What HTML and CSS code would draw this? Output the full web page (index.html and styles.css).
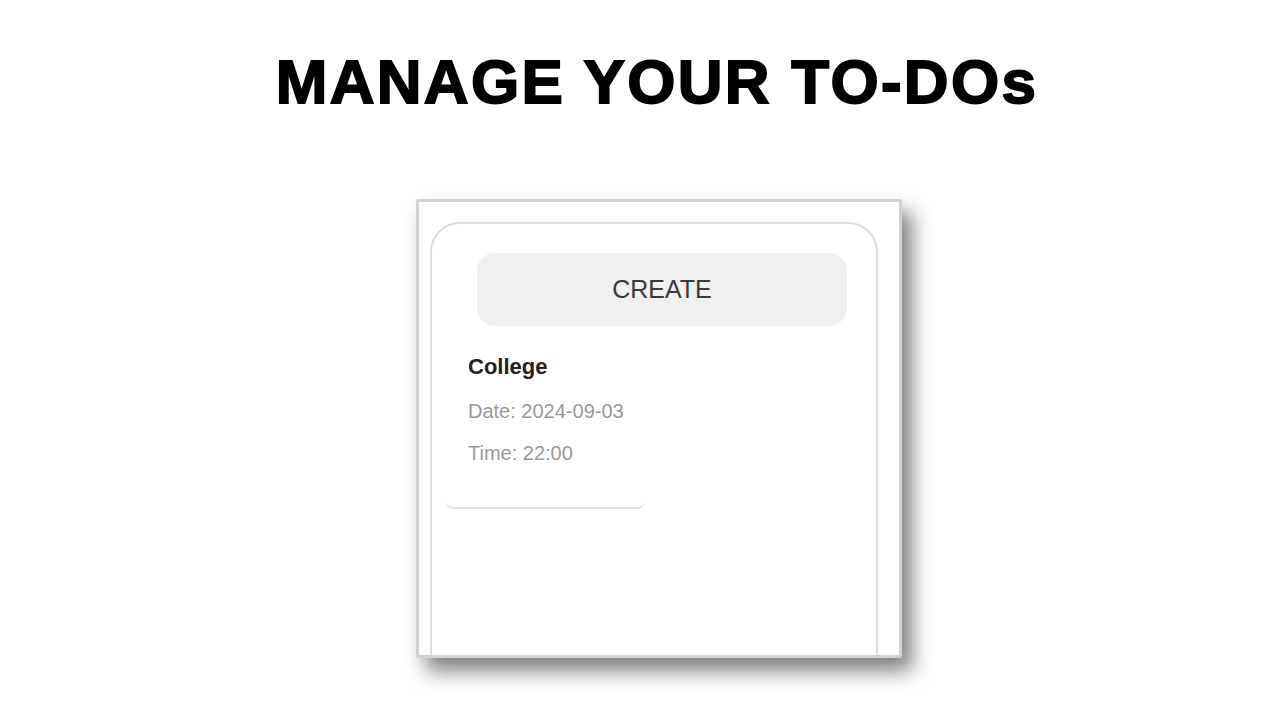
FILE: index.html
```html
<!DOCTYPE html>
<html>
<head>
<meta charset="utf-8">
<link rel="stylesheet" href="styles.css">
</head>
<body>
<div class="slide">
  <h1 class="title">MANAGE YOUR TO-DOs</h1>
  <div class="frame">
    <div class="panel">
      <div class="create">CREATE</div>
      <div class="card">
        <div class="card-title">College</div>
        <div class="card-meta">Date: 2024-09-03</div>
        <div class="card-meta">Time: 22:00</div>
      </div>
    </div>
  </div>
</div>
</body>
</html>
```
FILE: styles.css
```css
html, body {
  margin: 0;
  padding: 0;
  background: #ffffff;
}
.slide {
  width: 1280px;
  height: 720px;
  overflow: hidden;
  position: relative;
  font-family: "Liberation Sans", Arial, sans-serif;
}
.title {
  margin: 0;
  padding-top: 42px;
  height: 157px;
  box-sizing: border-box;
  text-align: center;
  font-family: "Liberation Sans", Arial, sans-serif;
  font-weight: bold;
  font-size: 62px;
  line-height: 80px;
  letter-spacing: 2.3px;
  color: #000;
  -webkit-text-stroke: 1.8px #000;
  padding-left: 34px;
}
.frame {
  margin-top: 42px;
  margin-left: 416px;
  width: 486px;
  height: 459px;
  box-sizing: border-box;
  border: 3px solid #d2d2d2;
  border-radius: 2px;
  background: #fff;
  box-shadow: 10px 13px 20px rgba(0, 0, 0, 0.5);
  overflow: hidden;
  padding-top: 20px;
  padding-left: 11px;
}
.panel {
  width: 448px;
  height: 520px;
  box-sizing: border-box;
  border: 2px solid #dcdcdc;
  border-radius: 30px;
  padding-top: 29px;
}
.create {
  margin-left: 45px;
  width: 370px;
  height: 73px;
  background: #f0f0f0;
  border-radius: 18px;
  display: flex;
  align-items: center;
  justify-content: center;
  font-size: 25px;
  color: #3a3a3a;
}
.card {
  margin-left: 13px;
  margin-top: 14px;
  width: 200px;
  box-sizing: border-box;
  padding: 13px 0 41px 23px;
  border-radius: 8px;
  border-bottom: 2px solid #e0e0e0;
}
.card-title {
  font-weight: bold;
  font-size: 22px;
  line-height: 28px;
  color: #222;
  margin-bottom: 17px;
}
.card-meta {
  font-size: 20px;
  line-height: 26px;
  color: #999;
  margin-bottom: 16px;
}
.card-meta:last-child {
  margin-bottom: 0;
}
```
